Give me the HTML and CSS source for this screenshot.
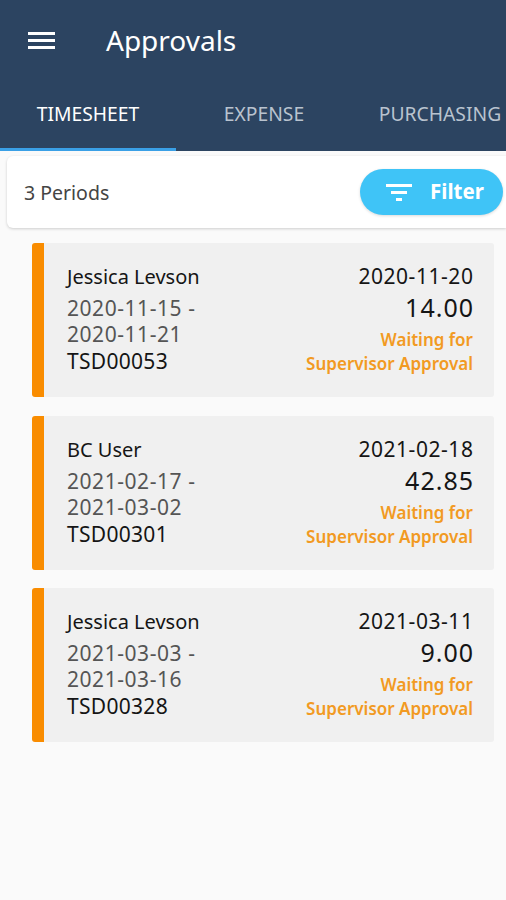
FILE: index.html
```html
<!DOCTYPE html>
<html>
<head>
<meta charset="utf-8">
<link rel="stylesheet" href="styles.css">
</head>
<body>
<header class="appbar">
  <div class="titlerow">
    <svg class="menu" width="28" height="20" viewBox="0 0 28 20"><rect x="0" y="2" width="27" height="3" fill="#fff"/><rect x="0" y="9" width="27" height="3" fill="#fff"/><rect x="0" y="16" width="27" height="3" fill="#fff"/></svg>
    <h1 class="title">Approvals</h1>
  </div>
  <nav class="tabs">
    <div class="tab active">TIMESHEET</div>
    <div class="tab">EXPENSE</div>
    <div class="tab">PURCHASING</div>
  </nav>
</header>
<section class="toolbar">
  <span class="count">3 Periods</span>
  <button class="filter">
    <svg width="28" height="22" viewBox="0 0 28 22"><rect x="1" y="3" width="26" height="3" fill="#fff"/><rect x="6" y="10" width="16" height="3" fill="#fff"/><rect x="11" y="17" width="6" height="3" fill="#fff"/></svg>
    <span>Filter</span>
  </button>
</section>
<main class="list">
  <article class="card">
    <div class="left">
      <div class="name">Jessica Levson</div>
      <div class="range">2020-11-15 -<br>2020-11-21</div>
      <div class="code">TSD00053</div>
    </div>
    <div class="right">
      <div class="date">2020-11-20</div>
      <div class="hours">14.00</div>
      <div class="status">Waiting for<br>Supervisor Approval</div>
    </div>
  </article>
  <article class="card">
    <div class="left">
      <div class="name">BC User</div>
      <div class="range">2021-02-17 -<br>2021-03-02</div>
      <div class="code">TSD00301</div>
    </div>
    <div class="right">
      <div class="date">2021-02-18</div>
      <div class="hours">42.85</div>
      <div class="status">Waiting for<br>Supervisor Approval</div>
    </div>
  </article>
  <article class="card">
    <div class="left">
      <div class="name">Jessica Levson</div>
      <div class="range">2021-03-03 -<br>2021-03-16</div>
      <div class="code">TSD00328</div>
    </div>
    <div class="right">
      <div class="date">2021-03-11</div>
      <div class="hours">9.00</div>
      <div class="status">Waiting for<br>Supervisor Approval</div>
    </div>
  </article>
</main>
</body>
</html>
```
FILE: styles.css
```css
* { box-sizing: border-box; }
html, body { margin: 0; padding: 0; }
body {
  width: 506px;
  height: 900px;
  overflow: hidden;
  background: #fafafa;
  font-family: "Noto Sans", "Open Sans", sans-serif;
}
.appbar {
  background: #2c4461;
  color: #fff;
}
.titlerow {
  height: 84px;
  display: flex;
  align-items: center;
  padding-left: 28px;
}
.menu { display: block; margin-top: -4px; }
.title {
  margin: -4px 0 0 50px;
  font-weight: 400;
  font-size: 28px;
}
.tabs {
  display: flex;
  height: 67px;
  white-space: nowrap;
}
.tab {
  flex: 0 0 176px;
  display: flex;
  align-items: center;
  justify-content: center;
  font-size: 19.3px;
  color: #b9c3cf;
  padding-bottom: 5px;
  border-bottom: 3px solid transparent;
}
.tab.active {
  color: #fff;
  border-bottom-color: #3aa0e6;
}
.toolbar {
  margin: 5px 0 0 7px;
  height: 72px;
  background: #fff;
  border-radius: 6px 0 0 6px;
  box-shadow: 0 1px 3px rgba(0,0,0,0.18);
  display: flex;
  align-items: center;
  justify-content: space-between;
  padding: 0 3px 0 17px;
}
.count {
  font-size: 19.5px;
  color: #444;
}
.filter {
  display: flex;
  align-items: center;
  gap: 17px;
  height: 46px;
  width: 143px;
  border: none;
  border-radius: 23px;
  background: #3fc4f7;
  color: #fff;
  font-family: inherit;
  font-size: 20.5px;
  font-weight: 700;
  padding: 0 0 2px 25px;
  box-shadow: 0 1px 3px rgba(0,0,0,0.15);
}
.filter svg { display: block; margin-top: 2px; }
.list {
  padding: 15px 12px 0 32px;
  display: flex;
  flex-direction: column;
  gap: 18.5px;
}
.card {
  height: 154px;
  background: #f0f0f0;
  border-left: 12px solid #f98c00;
  border-radius: 3px;
  display: flex;
  justify-content: space-between;
  padding: 20px 21px 0 23px;
}
.name { font-size: 20px; line-height: 27px; margin-bottom: 5px; color: #151515; }
.range { font-size: 21px; line-height: 26px; letter-spacing: 0.55px; color: #555; }
.code { font-size: 21px; line-height: 27px; margin-top: 1px; letter-spacing: 0.3px; color: #151515; }
.right { text-align: right; }
.date { font-size: 21px; line-height: 27px; letter-spacing: 0.55px; margin-right: -0.5px; color: #151515; }
.hours { font-size: 25px; line-height: 35px; letter-spacing: 1px; margin-right: -1px; color: #151515; }
.status { font-size: 17px; font-weight: 600; line-height: 24px; margin-top: 3px; color: #f29a22; }
```
